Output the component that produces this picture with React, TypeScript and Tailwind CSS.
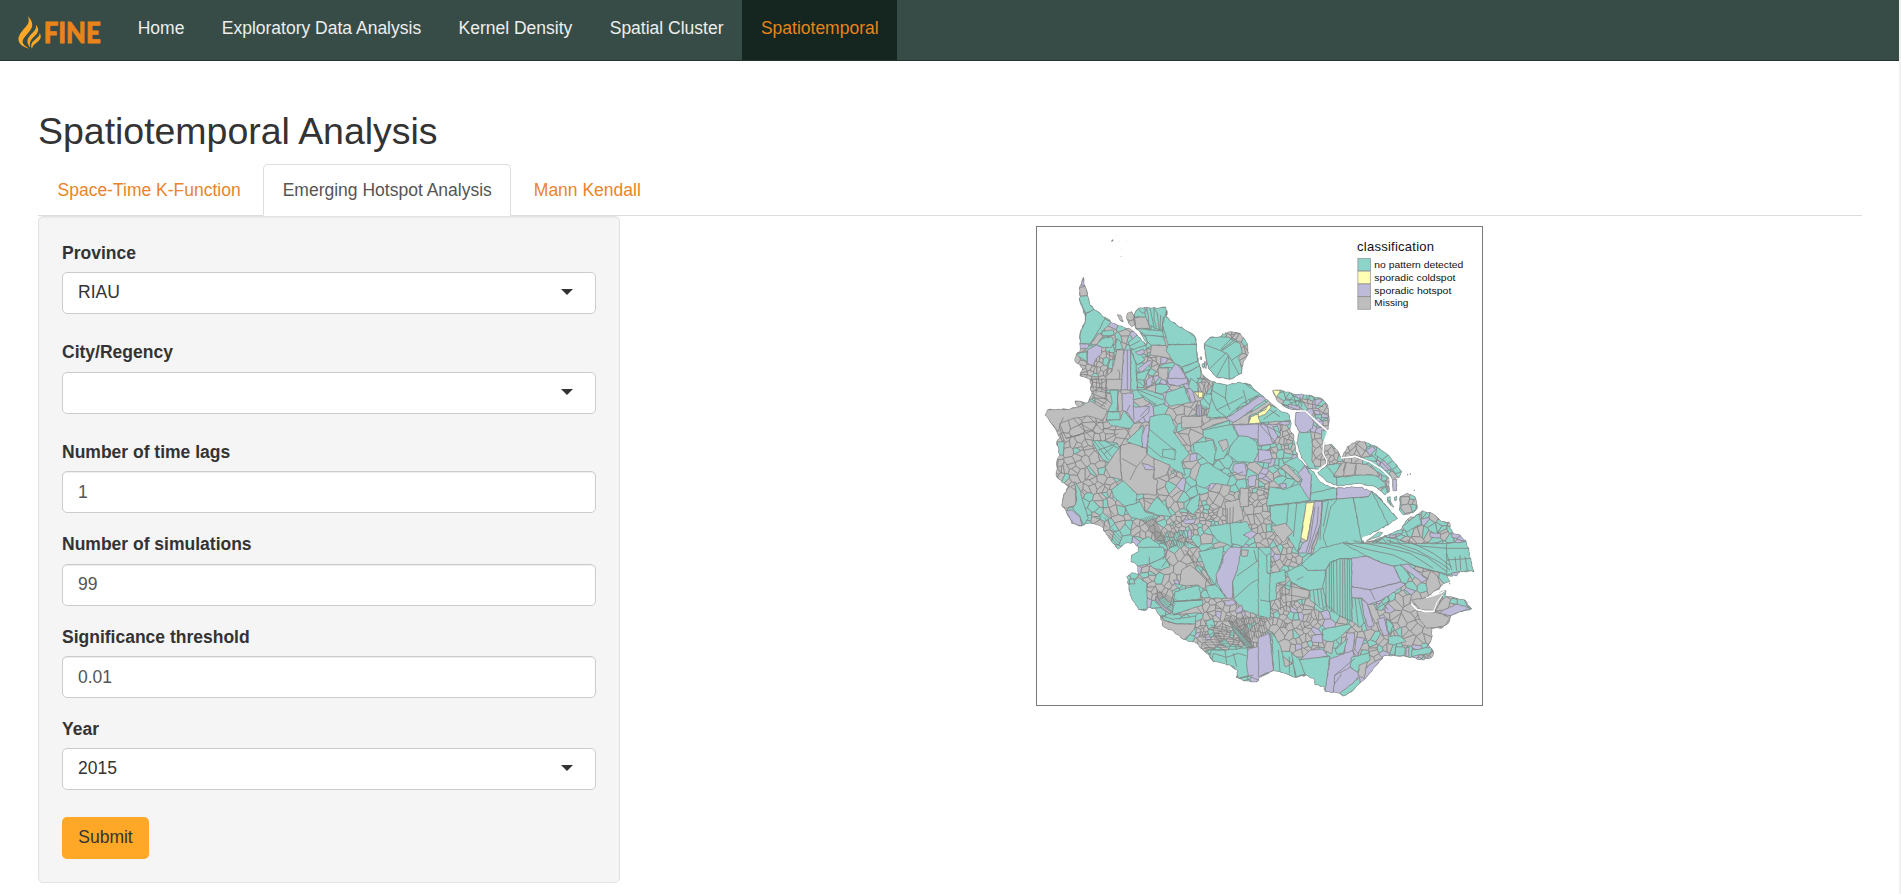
import React from "react";

type Pt = [number, number];
type Kind = "t" | "y" | "p" | "g";

const FILL: Record<Kind, string> = { t: "#8dd3c7", y: "#ffffb3", p: "#bebada", g: "#bebebe" };
const LINE = "#808080";

const parse = (s: string): Pt[] => s.trim().split(/\s+/).map((p) => p.split(",").map(Number) as Pt);
const toPath = (pts: Pt[]) => "M" + pts.map((p) => p[0].toFixed(1) + " " + p[1].toFixed(1)).join("L") + "Z";

function rng(seed: number) {
  let a = seed;
  return () => {
    a = (a + 0x6d2b79f5) | 0;
    let t = Math.imul(a ^ (a >>> 15), 1 | a);
    t = (t + Math.imul(t ^ (t >>> 7), 61 | t)) ^ t;
    return ((t ^ (t >>> 14)) >>> 0) / 4294967296;
  };
}

/* Breaks long edges up so a coast looks ragged. */
function rough(pts: Pt[], seed: number, amp: number): Pt[] {
  const r = rng(seed);
  const out: Pt[] = [];
  pts.forEach((p, i) => {
    const q = pts[(i + 1) % pts.length];
    const n = Math.max(1, Math.round(Math.hypot(q[0] - p[0], q[1] - p[1]) / 8));
    out.push(p);
    for (let k = 1; k < n; k++) {
      const t = k / n;
      out.push([p[0] + (q[0] - p[0]) * t + (r() - 0.5) * amp, p[1] + (q[1] - p[1]) * t + (r() - 0.5) * amp]);
    }
  });
  return out;
}

const MAINLAND = `160,172 166,200 172,226 180,255 194,270 225,292 250,310 275,318 305,330 320,342 335,362 349,376 350,368 335,345 318,327 312,303
312,282 325,265 345,262 380,265 408,262 412,275 408,290 440,315 475,335 495,350 500,375 502,410 510,440 515,460 530,475 560,490 590,495
630,487 655,492 690,522 720,548 750,572 778,585 782,605 780,630 792,650 795,675 802,710 820,730 845,752 862,775 885,795 918,805 950,802
990,802 1025,813 1045,830 1065,852 1085,878 1102,895 1075,915 1035,935 995,955 1002,970 1035,960 1080,942 1110,930 1130,900 1165,882
1177,872 1210,882 1235,905 1257,906 1260,925 1268,938 1290,945 1310,970 1318,1000 1325,1030 1332,1055 1300,1054 1285,1058 1280,1068
1250,1065 1260,1085 1235,1097 1228,1108 1210,1115 1190,1130 1210,1126 1248,1112 1245,1128 1280,1135 1305,1140 1325,1166 1290,1175 1262,1188
1255,1210 1230,1225 1205,1225 1205,1255 1195,1275 1210,1295 1205,1312 1180,1320 1130,1310 1065,1306 1045,1330 1015,1365 990,1390 965,1415
940,1428 930,1420 887,1415 882,1398 855,1395 850,1375 830,1365 795,1372 765,1360 730,1352 692,1370 685,1382 665,1386 635,1378 618,1372
625,1352 600,1335 550,1325 530,1300 500,1270 460,1258 425,1230 400,1220 388,1185 375,1165 355,1162 350,1170 325,1168 315,1150 300,1125
297,1095 290,1070 305,1058 325,1065 320,1035 303,1025 305,1005 325,995 326,980 310,967 285,970 265,988 235,950 215,920 200,914 175,910 155,918
125,910 108,872 95,855 100,830 115,800 80,770 80,725 90,705 80,665 90,655 78,630 60,605 45,585 52,570 110,568 145,560 135,543 175,548
185,525 180,480 150,468 158,445 135,425 138,405 150,395 150,340 165,305 165,285 150,245 148,205 155,190`;

const ISLANDS = [
  "523,370 540,352 570,350 600,335 630,340 652,370 655,400 640,425 635,460 600,478 560,472 535,445 525,400",
  "292,280 305,275 314,292 316,312 305,320 296,310 290,295",
  "262,284 272,286 280,305 272,303",
  "728,512 750,510 790,522 830,525 875,535 893,555 897,590 895,628 885,630 860,606 826,574 785,568 760,558 740,540",
  "798,577 825,575 848,598 892,634 882,665 878,700 890,715 888,732 865,748 840,745 815,715 800,670 808,635 795,610",
  "885,675 905,673 925,695 933,716 975,712 1020,727 1055,750 1077,770 1078,815 1065,825 1035,800 990,790 925,798 890,785 863,758 885,742 892,730 882,700",
  "935,713 952,680 980,663 1010,668 1040,680 1075,705 1115,755 1108,772 1085,775 1045,745 1010,720 980,707",
  "1088,778 1100,778 1100,812 1089,812",
  "1110,830 1130,820 1155,830 1162,865 1150,878 1120,885 1108,870",
  "1072,832 1081,830 1082,845 1092,862 1082,856 1073,846",
  "1093,832 1100,829 1100,840 1094,842",
  "512,410 516,412 514,420 510,416",
  "516,432 524,430 522,445 516,440",
  "524,424 530,430 528,446 523,440",
];

/* Cell density zones: centre, radius, cell size, share grey, share teal (rest hotspot). */
const ZONES: [number, number, number, number, number, number][] = [
  [700, 800, 2000, 31, 0.2, 0.72],
  [260, 420, 130, 24, 0.5, 0.45],
  [210, 450, 55, 15, 0.9, 0.1],
  [400, 430, 60, 17, 0.5, 0.42],
  [90, 620, 130, 34, 0.98, 0.02],
  [230, 610, 90, 30, 0.92, 0.08],
  [140, 740, 95, 19, 0.94, 0.06],
  [200, 800, 60, 20, 0.92, 0.08],
  [220, 900, 60, 22, 0.45, 0.55],
  [400, 710, 100, 32, 0.95, 0],
  [440, 760, 30, 14, 0.8, 0.15],
  [480, 580, 55, 22, 0.85, 0.1],
  [520, 490, 24, 11, 0.9, 0.1],
  [415, 835, 35, 18, 0.8, 0.2],
  [350, 900, 60, 19, 0.88, 0.12],
  [440, 930, 60, 15, 0.62, 0.35],
  [535, 880, 50, 13, 0.85, 0.12],
  [600, 850, 45, 22, 0.8, 0.2],
  [690, 830, 45, 15, 0.8, 0.15],
  [600, 950, 60, 25, 0.3, 0.66],
  [765, 660, 45, 14, 0.72, 0.2],
  [740, 740, 50, 20, 0.35, 0.55],
  [700, 920, 50, 20, 0.8, 0.2],
  [745, 990, 65, 17, 0.88, 0.1],
  [380, 1070, 70, 20, 0.85, 0.12],
  [480, 1040, 60, 26, 0.8, 0.2],
  [550, 1150, 60, 21, 0.88, 0.1],
  [560, 1240, 60, 14, 0.85, 0.12],
  [640, 1230, 70, 15, 0.88, 0.08],
  [580, 1310, 50, 22, 0.05, 0.95],
  [770, 1180, 70, 15, 0.84, 0.1],
  [820, 1230, 70, 17, 0.78, 0.15],
  [730, 1100, 50, 22, 0.9, 0.1],
  [1000, 1260, 90, 22, 0.65, 0.22],
  [1070, 1160, 60, 20, 0.5, 0.35],
  [1170, 1200, 95, 26, 0.96, 0.03],
  [1190, 1290, 40, 13, 0.7, 0.2],
  [1190, 1070, 55, 24, 0.88, 0.12],
  [1130, 1100, 36, 15, 0.7, 0.2],
  [1160, 930, 70, 19, 0.35, 0.5],
  [1240, 940, 70, 21, 0.7, 0.22],
  [1270, 1010, 60, 20, 0.2, 0.65],
  [830, 540, 90, 21, 0.3, 0.6],
  [870, 590, 45, 17, 0.4, 0.4],
  [860, 690, 50, 21, 0.78, 0.2],
  [905, 715, 40, 16, 0.98, 0.02],
  [980, 690, 50, 20, 0.92, 0.08],
  [1060, 715, 60, 24, 0.15, 0.65],
  [1140, 850, 40, 24, 0.5, 0.5],
  [1070, 800, 24, 13, 0.7, 0.3],
  [640, 395, 30, 16, 0.95, 0.05],
  [610, 345, 25, 14, 0.9, 0.1],
];

type Cell = { d: string; kind: Kind };

function buildCells(): Cell[] {
  const r = rng(77);
  const sites: { x: number; y: number; s: number; kind: Kind }[] = [];
  const zoneAt = (x: number, y: number) => {
    for (let i = ZONES.length - 1; i >= 0; i--) {
      const z = ZONES[i];
      if (Math.hypot(x - z[0], y - z[1]) <= z[2]) return i;
    }
    return -1;
  };
  ZONES.forEach((z, zi) => {
    const x0 = Math.max(30, z[0] - z[2]);
    const x1 = Math.min(1350, z[0] + z[2]);
    const y0 = Math.max(160, z[1] - z[2]);
    const y1 = Math.min(1440, z[1] + z[2]);
    for (let y = y0; y <= y1; y += z[3])
      for (let x = x0; x <= x1; x += z[3]) {
        const px = x + (r() - 0.5) * z[3] * 1.9;
        const py = y + (r() - 0.5) * z[3] * 1.9;
        const v = r();
        if (zoneAt(px, py) !== zi) continue;
        sites.push({ x: px, y: py, s: z[3], kind: v < z[4] ? "g" : v < z[4] + z[5] ? "t" : "p" });
      }
  });
  const B = 60;
  const grid = new Map<string, number[]>();
  sites.forEach((s, i) => {
    const k = Math.floor(s.x / B) + ":" + Math.floor(s.y / B);
    const list = grid.get(k);
    if (list) list.push(i);
    else grid.set(k, [i]);
  });
  return sites.map((s, i) => {
    const h = s.s * 2.4;
    let poly: Pt[] = [[s.x - h, s.y - h], [s.x + h, s.y - h], [s.x + h, s.y + h], [s.x - h, s.y + h]];
    const gx = Math.floor(s.x / B);
    const gy = Math.floor(s.y / B);
    for (let a = -2; a <= 2; a++)
      for (let b = -2; b <= 2; b++)
        for (const j of grid.get(gx + a + ":" + (gy + b)) || []) {
          if (j === i) continue;
          const o = sites[j];
          const nx = o.x - s.x;
          const ny = o.y - s.y;
          const c = (nx * (o.x + s.x) + ny * (o.y + s.y)) / 2;
          const next: Pt[] = [];
          for (let k = 0; k < poly.length; k++) {
            const p = poly[k];
            const q = poly[(k + 1) % poly.length];
            const dp = p[0] * nx + p[1] * ny - c;
            const dq = q[0] * nx + q[1] * ny - c;
            if (dp <= 0) next.push(p);
            if (dp < 0 !== dq < 0 && dp !== dq) {
              const t = dp / (dp - dq);
              next.push([p[0] + (q[0] - p[0]) * t, p[1] + (q[1] - p[1]) * t]);
            }
          }
          poly = next;
        }
    return { d: poly.length > 2 ? toPath(poly) : "", kind: s.kind };
  });
}

/* Named districts, grouped by map sheet; each sheet has its own origin. */
const SHEETS: { at: Pt; areas: [Kind, string][]; lines: string[] }[] = [
  {
    at: [0, 0],
    areas: [
      ["p", "153,195 160,172 166,198"],
      ["g", "148,203 168,198 173,226 150,229"],
      ["t", "148,229 173,226 182,255 194,268 168,280 150,245"],
      ["t", "168,280 194,268 225,292 226,302 182,372 148,372 152,335 166,305"],
      ["t", "226,296 243,308 220,332 182,370"],
      ["g", "182,372 205,340 220,346 200,374"],
      ["p", "148,371 178,372 172,386 148,385"],
      ["p", "172,390 200,374 217,380 215,400 198,418 190,437 172,430"],
      ["t", "200,374 215,356 245,350 253,365 245,382 217,382"],
      ["t", "136,402 170,395 172,425 150,412"],
      ["t", "216,333 250,330 252,345 216,347"],
      ["t", "255,388 260,356 270,362 280,388"],
      ["g", "260,389 282,390 275,510 228,510 228,468 245,455 255,420"],
      ["p", "282,390 302,390 303,510 273,510"],
      ["t", "302,388 318,430 322,510 303,510"],
      ["t", "295,366 325,343 346,374 322,393 300,385"],
      ["t", "303,390 345,376 352,385 330,400 345,420 320,435"],
      ["p", "316,396 340,388 344,398 326,405"],
      ["p", "325,445 360,420 366,430 332,458"],
      ["t", "320,460 358,448 345,480 322,478"],
      ["p", "350,480 368,468 366,492 350,505"],
      ["t", "384,438 420,428 450,430 435,442 395,444"],
      ["g", "385,444 415,444 412,485 385,470"],
      ["p", "412,490 418,455 436,430 452,445 479,490 430,497"],
      ["t", "350,262 410,262 408,285 397,332 378,325 358,315"],
      ["g", "312,292 347,290 360,325 318,325"],
      ["t", "312,282 325,265 335,278 345,280 347,290 314,292"],
      ["t", "318,325 397,333 401,350 345,346"],
      ["t", "345,346 401,350 408,376 365,376 350,362"],
      ["g", "365,376 408,376 430,420 400,411 360,404"],
      ["t", "412,270 408,290 440,315 475,335 495,350 500,373 414,374 397,315 405,288"],
      ["t", "414,374 500,373 503,423 455,442 430,426 408,392"],
      ["t", "455,442 503,423 510,438 464,460"],
      ["t", "464,460 510,438 514,462 500,490 484,505 478,485"],
      ["t", "523,370 540,352 570,350 597,352 612,362 632,372 636,400 625,412 635,445 635,460 600,478 560,472 535,445 525,400"],
    ],
    lines: [
      "M525 374L572 392L618 356M572 388L610 350M576 392L618 364M540 445L590 397M560 470L596 405L598 478M598 410L630 468M596 405L572 392M606 420L635 400",
      "M360 264L372 322M372 264L372 300L380 322M382 282L388 330M392 285L390 330M400 290L396 330M372 264L384 284",
      "M292 390L292 510M262 450Q272 448 268 478",
      "M238 390L240 420L228 460M250 400L248 440",
      "M300 378L330 362M345 405L362 415",
    ],
  },
  {
    at: [0, 480],
    areas: [
      ["g", "40,105 50,88 110,88 150,80 180,62 232,92 218,122 175,108 130,115 92,130 84,155 60,125"],
      ["t", "240,30 264,30 262,95 234,95 246,70"],
      ["t", "234,95 270,95 270,120 228,120"],
      ["t", "228,120 270,120 282,92 312,130 302,145 245,138"],
      ["p", "275,40 310,40 310,80 358,80 356,98 315,130 290,95 276,90"],
      ["g", "264,30 275,40 277,92 264,95"],
      ["t", "322,30 345,28 400,45 405,70 380,78 345,60"],
      ["t", "408,38 462,20 482,68 420,78 406,58"],
      ["p", "410,-5 474,-5 472,10 440,18 415,12"],
      ["p", "470,25 486,25 497,65 485,68"],
      ["p", "500,75 515,75 515,108 500,108"],
      ["t", "482,-5 502,10 505,35 490,36 476,20"],
      ["y", "492,36 522,36 520,50 508,53"],
      ["t", "360,110 400,102 420,105 437,142 430,155 478,222 455,245 466,286 350,225 358,135"],
      ["t", "290,182 340,135 338,200 320,202"],
      ["p", "348,135 358,136 350,205 337,200 335,168"],
      ["t", "398,208 435,208 435,240 398,230"],
      ["t", "186,182 222,182 262,190 270,205 235,248 215,235"],
      ["g", "272,196 300,190 350,205 350,222 375,238 370,295 382,300 380,345 320,342 275,302 270,240"],
      ["g", "225,262 272,196 270,240 275,300 240,290"],
      ["g", "372,237 420,255 410,285 372,298"],
      ["p", "336,248 372,262 374,270 345,268"],
      ["t", "245,328 280,302 320,342 320,372 285,380 250,350"],
      ["t", "284,380 330,365 345,395 390,410 350,425 300,410"],
      ["t", "135,305 150,330 160,368 175,415 160,438 150,410 128,385 140,360"],
      ["g", "100,345 118,318 136,330 136,375 110,385 94,378"],
      ["p", "106,392 125,390 150,410 155,438 130,430"],
      ["t", "82,185 102,185 100,225 85,225"],
      ["g", "455,110 516,108 516,140 455,145"],
      ["t", "548,0 575,12 635,5 690,42 640,68 590,112 530,112 545,55"],
      ["g", "512,140 545,118 590,113 600,120 560,132 518,150"],
      ["t", "520,148 600,120 600,135 520,165"],
      ["p", "588,115 690,48 712,55 612,128"],
      ["g", "608,128 690,80 718,60 720,72 680,100 658,108 655,132 605,134"],
      ["y", "655,132 662,110 685,103 700,88 718,74 722,96 695,110 690,130"],
      ["p", "610,134 722,133 722,192 688,200 682,178 625,168"],
      ["p", "680,215 722,208 722,250 672,245"],
      ["t", "600,200 625,168 655,170 680,185 686,215 670,248 620,245 595,225"],
      ["t", "518,150 605,134 625,168 600,200 582,235 555,240 550,225 560,205 550,180 520,170"],
      ["g", "565,185 590,178 595,200 580,215"],
      ["t", "497,300 512,255 535,248 560,265 600,290 592,315 545,310 525,325 500,315"],
      ["t", "490,190 550,180 558,215 550,255 535,248 510,225 492,215"],
      ["p", "480,222 500,220 500,240 480,245"],
      ["p", "612,252 645,248 650,285 625,285 608,270"],
      ["p", "655,290 680,285 675,320 655,318"],
      ["g", "585,365 632,358 640,420 590,435"],
      ["g", "630,325 655,325 655,380 630,380"],
      ["p", "456,422 498,416 492,430 468,432"],
      ["p", "474,450 484,450 484,478 474,478"],
      ["t", "380,350 410,380 425,410 380,405 350,392"],
      ["t", "480,360 510,340 505,385 488,405 468,385"],
      ["t", "535,440 600,430 620,445 605,500 560,480"],
      ["t", "600,430 650,425 668,460 640,500 605,490"],
      ["p", "640,465 665,452 680,460 662,478"],
      ["t", "300,545 305,520 335,480 355,470 385,490 410,545"],
      ["t", "500,545 512,520 545,500 580,525 575,545"],
    ],
    lines: [
      "M358 148L440 215M350 195L398 235M545 55L560 90L590 112M590 12L586 55L600 90M545 30L588 56M640 30L650 68M560 90L640 50M88 130L108 175L150 165M108 175L180 155L220 115M130 115L160 150L188 175M150 130L200 160M92 130L100 112M175 108L215 150L245 140M250 150L300 145M272 196L300 150M275 235L320 260L350 225M320 260L300 300M222 182L265 160",
      "M192 182L235 240M205 184L245 230M225 183L265 205M205 210L262 190M222 222L250 200",
      "M180 -2L275 -2M180 20L235 25M185 -5L190 25M200 0L198 40M215 -5L215 35M230 0L225 60M185 40L235 60M186 50L230 72M185 58L225 80M190 30L240 40",
      "M600 290L640 275M592 385L592 430M600 382L600 432M610 380L608 430M500 -5L545 0",
      "M540 0L530 25M688 140L722 190M695 134L722 170M310 80L312 120M355 82L330 110M290 95L300 75",
      "M345 0L345 20M320 0L345 22L395 10M325 30L400 60M335 45L380 75",
    ],
  },
  {
    at: [0, 990],
    areas: [
      ["t", "300,40 303,12 325,-8 400,-8 405,20 360,42 325,48"],
      ["t", "358,42 405,20 420,50 395,60 372,55"],
      ["t", "295,105 325,82 350,98 352,178 325,180 298,135"],
      ["t", "298,88 312,85 315,102 298,102"],
      ["t", "435,125 505,105 512,130 510,148 430,155"],
      ["t", "430,155 518,148 518,165 455,188 428,192"],
      ["t", "395,196 430,208 497,198 497,222 440,222 402,212"],
      ["g", "388,195 402,212 440,222 497,222 492,240 460,270 425,244 396,236"],
      ["g", "430,195 500,170 515,188 450,192"],
      ["p", "378,138 400,168 425,185 420,192 395,175 376,150"],
      ["p", "430,90 445,90 448,102 438,102"],
      ["t", "505,5 580,-10 578,20 562,70 558,100 545,104"],
      ["p", "562,100 558,75 578,38 580,18 600,-8 634,-8 630,45 608,95 608,145 590,145"],
      ["t", "634,-8 722,-8 722,195 690,198 640,180 612,148 608,95 622,60"],
      ["g", "634,0 655,0 652,18 634,18"],
      ["t", "525,108 558,104 590,145 540,145"],
      ["p", "580,152 610,150 618,162 590,168"],
      ["p", "615,180 635,165 638,182 620,190"],
      ["t", "528,215 548,205 555,230 535,238"],
      ["t", "545,298 590,300 650,293 655,310 652,340 672,372 625,385 612,350 555,338 540,320"],
      ["p", "654,298 690,288 692,310 697,375 685,390 655,378 650,345"],
      ["p", "690,285 708,262 722,250 722,370 697,372 692,330"],
      ["t", "598,215 612,230 668,290 650,292 620,255"],
      ["g", "455,60 480,45 530,85 525,118 500,105 470,108 448,104"],
    ],
    lines: [
      "M620 78L680 35L720 10M612 145L665 98L720 70M680 35L672 0M722 120L690 198M430 155L516 150M545 335L550 310L590 322L625 310L650 318M585 300L590 340M610 310L620 350M395 200L420 190M395 52L420 18M410 5L398 30M358 20L358 42M465 0L540 100M480 0L552 100M475 10L500 60L545 108M630 385L670 375",
      "M602 212L670 290M612 212L668 280",
    ],
  },
  {
    at: [690, 480],
    areas: [
      ["y", "36,30 62,30 50,53"],
      ["p", "105,94 138,94 162,122 158,145 135,160 118,155 104,130"],
      ["p", "158,122 175,112 190,128 180,142"],
      ["t", "116,155 135,158 152,155 158,195 155,240 170,268 142,265 124,238 108,192"],
      ["t", "185,150 204,153 190,192 184,175"],
      ["p", "160,92 178,92 180,104 168,104"],
      ["p", "85,72 118,78 118,90 85,88"],
      ["t", "30,75 -5,108 0,128 92,122 95,105 62,88"],
      ["y", "-5,110 -5,98 15,90 28,72 33,82 15,104"],
      ["p", "-5,132 62,135 60,158 38,192 -5,196"],
      ["t", "38,140 52,138 62,165 56,172"],
      ["p", "-5,208 30,212 38,235 -5,246"],
      ["p", "60,125 88,124 88,134 60,134"],
      ["t", "70,250 115,228 135,255 118,280 95,262"],
      ["p", "114,280 134,258 156,288 150,360 118,325 126,298"],
      ["t", "138,262 165,270 195,310 230,320 230,357 152,362 154,285"],
      ["t", "18,378 28,320 75,328 118,312 150,362 85,370"],
      ["g", "62,262 78,252 122,298 115,308"],
      ["p", "58,312 78,310 80,322 66,326"],
      ["t", "230,322 230,357 150,363 152,340"],
      ["p", "230,320 300,316 340,331 325,350 230,358"],
      ["t", "187,364 232,357 220,395 205,430 208,500 225,520 200,540 150,540 175,470"],
      ["t", "232,357 280,354 308,492 320,540 215,540 190,470 212,380"],
      ["t", "280,354 325,350 335,333 390,430 310,478 308,500"],
      ["t", "335,333 372,370 416,418 385,435"],
      ["t", "30,378 88,372 80,440 52,440 32,420"],
      ["t", "85,371 140,367 122,478 112,515 82,470 80,430"],
      ["y", "139,368 163,366 141,483 123,474"],
      ["p", "163,366 187,364 182,430 155,502 154,520 114,518 126,492 142,482"],
      ["g", "32,440 75,430 98,455 70,488 55,470"],
      ["p", "275,540 310,526 330,540"],
      ["t", "308,512 345,490 372,470 420,480 470,505 540,525 560,545 320,545"],
      ["t", "385,455 420,440 430,458 395,466"],
      ["t", "425,440 475,402 485,430 440,455"],
      ["p", "510,458 542,460 542,474 512,472"],
      ["p", "485,490 530,488 525,500 490,510"],
      ["p", "574,458 606,464 590,475 576,472"],
      ["t", "170,277 200,255 228,262 222,290 235,292 300,284 345,285 375,310 378,318 345,330 300,315 235,322 198,308"],
      ["t", "198,255 242,250 235,268 222,286"],
      ["g", "220,288 245,250 258,248 250,270 262,290"],
      ["g", "258,248 290,250 282,285 250,288"],
      ["g", "290,250 325,255 350,275 360,290 340,285 285,285"],
      ["t", "320,240 350,245 395,290 385,295 350,275"],
      ["p", "396,298 412,296 412,334 396,334"],
      ["t", "350,200 385,220 425,275 408,282 370,240 345,225"],
      ["p", "318,210 338,198 346,208 330,228"],
      ["p", "348,240 362,245 355,262"],
    ],
    lines: [
      "M165 380L150 480L138 516M175 380L172 430L145 516M187 364L180 480M205 365L190 440M110 372L100 470M390 480L400 540M410 480L470 538M350 490L385 540M370 478L420 540M335 500L360 540M0 135L50 190M12 134L62 160M20 134L38 190M30 90L60 110M10 118L50 90M230 290L230 320M62 262L116 310M350 485L370 475",
      "M60 70L120 92M120 50L125 80M100 42L110 80M75 55L190 80M140 48L145 78M165 52L165 78",
      "M365 240L385 225M380 255L400 240M395 270L412 258M190 100L207 100M170 130L206 110",
    ],
  },
  {
    at: [690, 990],
    areas: [
      ["t", "-5,-8 20,18 22,68 32,72 30,205 -5,198"],
      ["t", "30,70 75,60 78,95 50,100 48,150 28,155"],
      ["t", "148,20 180,-5 260,-25 330,18 275,26 240,26 210,38 195,62 145,62 125,45"],
      ["t", "80,65 125,45 145,62 195,60 202,95 192,118 150,122 122,112 92,95"],
      ["g", "92,98 125,115 148,122 145,145 70,158 62,140 88,130"],
      ["t", "198,62 210,38 240,26 276,26 276,214 240,198 200,165 188,118"],
      ["t", "276,142 305,145 318,215 300,232 276,214"],
      ["t", "148,122 190,115 200,165 190,180 150,150"],
      ["p", "275,25 320,18 370,40 402,48 424,95 330,120 275,110"],
      ["p", "275,110 330,120 424,95 436,105 365,150 325,166 305,144 275,143"],
      ["t", "320,18 250,-20 560,-20 640,0 560,75 500,58 450,42 402,48 370,40"],
      ["t", "402,48 424,44 450,80 440,100 424,98"],
      ["p", "420,46 444,42 502,88 486,98 455,72"],
      ["t", "560,-20 622,-25 642,66 622,62 560,75"],
      ["p", "574,70 598,64 602,78 580,82"],
      ["t", "345,178 380,138 388,150 365,182"],
      ["g", "512,62 530,75 542,108 505,140 498,100"],
      ["g", "455,150 510,140 555,118 545,145 525,182 480,178"],
      ["g", "470,182 525,188 545,190 570,205 555,228 500,235 480,210"],
      ["g", "525,182 545,150 560,140 575,150 560,180"],
      ["p", "542,185 590,162 635,175 600,185 570,197 545,192"],
      ["t", "568,160 575,145 592,148 592,163"],
      ["p", "304,148 322,160 342,228 325,232 310,190"],
      ["g", "322,165 342,162 365,215 345,220"],
      ["p", "352,208 372,202 386,256 370,258"],
      ["t", "188,238 265,222 275,228 240,262 215,278 188,270"],
      ["p", "260,248 284,250 282,280 275,310 252,318"],
      ["t", "225,300 262,265 250,310 230,312"],
      ["p", "288,262 315,265 295,312 285,300"],
      ["g", "200,275 222,275 215,312 190,300"],
      ["t", "385,258 420,258 438,275 400,285 385,282"],
      ["t", "380,205 400,225 390,255 382,240"],
      ["p", "-5,262 28,245 40,362 -5,380"],
      ["t", "36,245 62,290 75,350 100,340 108,385 75,372 40,364"],
      ["t", "95,310 122,330 145,350 135,372 108,380 100,345"],
      ["p", "122,328 150,300 188,298 205,318 140,330"],
      ["p", "155,256 186,252 190,278 155,276"],
      ["t", "118,330 210,318 197,428 160,408 135,372"],
      ["p", "210,326 278,302 285,330 272,362 225,375 222,430 195,428"],
      ["p", "225,375 272,352 300,372 290,395 240,435 220,430"],
      ["t", "275,322 328,308 330,330 290,365 270,352"],
      ["p", "328,345 378,315 300,405 290,385"],
      ["t", "298,382 302,402 252,440 240,430"],
      ["g", "298,345 322,335 312,385 295,375"],
      ["t", "408,290 435,292 435,318 405,318"],
      ["t", "455,300 520,290 510,310 455,320"],
      ["p", "438,292 448,292 445,320 438,320"],
    ],
    lines: [
      "M208 40L208 180M214 34L215 185M220 30L222 190M230 28L232 190M240 26L240 200M248 26L248 205M254 26L256 208M262 26L262 212M268 26L270 212M198 62L198 165M285 143L295 232M295 143L312 220M160 122L165 160M172 118L178 168M182 118L190 175",
      "M260 -20L330 0L400 15L470 50L560 72M280 -28L400 -2L450 10L520 55M330 -30L420 -8L500 20L560 65M380 -30L470 0L540 38L570 60M440 -30L520 10L575 50M420 -30L480 -12L560 -5L635 -5M560 30L635 25M560 10L575 60M585 20L590 62M600 15L602 60M615 20L622 60",
      "M225 375L285 325M245 372L225 400M110 90L130 80M0 150L30 155M30 72L20 68M55 100L140 120M60 130L145 145M60 110L62 180M75 100L80 180M95 95L95 170M55 300L60 365M88 320L88 370M330 118L345 150M345 180L390 150M360 150L385 180",
    ],
  },
];

/* Fans of narrow parcels: start edge, end edge, count. */
const FANS: [number, number, number, number, number, number, number, number, number][] = [
  [335, 895, 370, 885, 385, 965, 412, 980, 7],
  [395, 935, 460, 930, 420, 985, 475, 975, 9],
  [205, 915, 240, 870, 225, 935, 252, 885, 4],
  [230, 950, 245, 925, 262, 985, 275, 955, 4],
  [380, 1110, 374, 1145, 440, 1140, 425, 1185, 8],
  [590, 1195, 640, 1190, 640, 1275, 668, 1285, 9],
  [540, 1215, 560, 1275, 600, 1225, 640, 1282, 8],
  [640, 1190, 700, 1190, 655, 1265, 715, 1245, 9],
  [510, 1245, 525, 1290, 570, 1240, 590, 1290, 6],
  [555, 480, 505, 505, 540, 525, 505, 535, 3],
  [500, 555, 530, 560, 498, 590, 530, 588, 6],
];

const fanPath = (f: (typeof FANS)[number]) => {
  let d = "";
  for (let i = 0; i <= f[8]; i++) {
    const t = i / f[8];
    d += `M${(f[0] + (f[2] - f[0]) * t).toFixed(1)} ${(f[1] + (f[3] - f[1]) * t).toFixed(1)}L${(f[4] + (f[6] - f[4]) * t).toFixed(1)} ${(f[5] + (f[7] - f[5]) * t).toFixed(1)}`;
  }
  return d;
};

const LAND = [toPath(rough(parse(MAINLAND), 5, 5)), ...ISLANDS.map((s, i) => toPath(rough(parse(s), 20 + i, 3)))].join("");
const CELLS = buildCells();

const LEGEND: { kind: Kind; label: string; y: number; w: number }[] = [
  { kind: "t", label: "no pattern detected", y: 114, w: 267 },
  { kind: "y", label: "sporadic coldspot", y: 152.5, w: 243 },
  { kind: "p", label: "sporadic hotspot", y: 191, w: 231 },
  { kind: "g", label: "Missing", y: 229, w: 102 },
];

function HotspotMap() {
  return (
    <svg className="block h-[490px] w-[480px] shrink-0" viewBox="0 0 1440 1470" role="img" aria-label="Emerging hotspot map of Riau">
      <defs>
        <clipPath id="land">
          <path d={LAND} />
        </clipPath>
      </defs>
      <rect x="19.5" y="19.5" width="1338" height="1437" fill="#fff" stroke="#7a7a7a" strokeWidth="3" />
      <g clipPath="url(#land)" stroke={LINE} strokeWidth="2.3" strokeLinejoin="round">
        <path d={LAND} fill={FILL.g} />
        <g strokeWidth="2">
          {CELLS.map((c, i) => (
            <path key={i} d={c.d} fill={FILL[c.kind]} />
          ))}
        </g>
        {SHEETS.map((s, i) => (
          <g key={i} transform={`translate(${s.at[0]} ${s.at[1]})`}>
            {s.areas.map(([kind, pts], j) => (
              <path key={j} d={toPath(rough(parse(pts), 100 + j, 2.5))} fill={FILL[kind]} />
            ))}
            {s.lines.map((d, j) => (
              <path key={"l" + j} d={d} fill="none" />
            ))}
          </g>
        ))}
        {FANS.map((f, i) => (
          <path key={i} d={fanPath(f)} fill="none" strokeWidth="2" />
        ))}
      </g>
      <path d={LAND} fill="none" stroke={LINE} strokeOpacity="0.75" strokeWidth="2.2" />
      <g fill="none" stroke="#fff" strokeWidth="5" strokeLinecap="round" strokeLinejoin="round">
        <path d="M1145 1152L1160 1168L1185 1174L1212 1174" />
        <path d="M1212 1172L1222 1145L1240 1122" strokeWidth="3" />
        <path d="M1190 1133L1225 1122L1242 1114" strokeWidth="4" />
        <path d="M795 573L826 573L860 605L893 634" strokeWidth="5" />
        <path d="M893 634L881 668L879 700L890 720L889 732L868 747" strokeWidth="4" />
        <path d="M934 714L975 709L1020 726L1055 748L1080 772L1083 810" strokeWidth="5" />
        <path d="M1002 956L1035 946L1080 926L1106 905" strokeWidth="12" />
      </g>
      <path d="M1030 948L1045 936L1058 938L1050 948L1010 962Z" fill={FILL.t} stroke={LINE} strokeWidth="2" />
      <g fill={LINE}>
        <path d="M243 64L248 58L251 60L246 66Z" />
        <g fillOpacity="0.5">
          <circle cx="260" cy="46" r="1" /><circle cx="268" cy="63" r="1" /><circle cx="290" cy="65" r="1" />
          <circle cx="273" cy="89" r="1" /><path d="M270 109h6v1h-6z" />
        </g>
        <circle cx="578" cy="342" r="2" /><circle cx="586" cy="339" r="2" />
        <circle cx="1133" cy="764" r="2" /><circle cx="1141" cy="762" r="2" /><circle cx="1153" cy="811" r="2" />
        <circle cx="1259" cy="1091" r="2" /><circle cx="1005" cy="794" r="2" />
      </g>
      <g fontFamily="'Liberation Sans', Arial, sans-serif" fill="#111">
        <text x="981" y="93" fontSize="39" textLength="231">classification</text>
        {LEGEND.map((l) => (
          <g key={l.kind}>
            <rect x="983.5" y={l.y + 1} width="38" height="38" fill={FILL[l.kind]} stroke={LINE} strokeOpacity="0.7" strokeWidth="2.5" />
            <text x="1033" y={l.y + 30} fontSize="27" textLength={l.w} lengthAdjust="spacingAndGlyphs">{l.label}</text>
          </g>
        ))}
      </g>
    </svg>
  );
}

function Logo() {
  return (
    <svg className="mt-[10px] h-[42px] w-[84px] shrink-0" viewBox="0 -12 252 126" role="img" aria-label="FINE">
      <path d="M29 6C39 16 46 27 41 41C35 56 16 68 14 81C13 91 20 96 34 104C22 101 8 95 3 84C-3 69 9 54 21 41C33 29 35 18 29 6Z" fill="#ffa726" />
      <path d="M54 32C64 44 62 55 51 65C40 75 32 84 37 101C24 87 27 73 38 62C49 51 56 45 54 32Z" fill="#ffa726" />
      <path d="M65 58C71 67 69 76 58 84C50 90 44 94 42 104C36 92 42 84 51 77C60 70 65 66 65 58Z" fill="#ffa726" />
      <text x="77" y="88" textLength="171" lengthAdjust="spacingAndGlyphs" fontFamily="Lato, sans-serif" fontWeight="900" fontSize="88" fill="#e8841a" stroke="#e8841a" strokeWidth="2.5">FINE</text>
    </svg>
  );
}

const NAV = ["Home", "Exploratory Data Analysis", "Kernel Density", "Spatial Cluster", "Spatiotemporal"];
const TABS = ["Space-Time K-Function", "Emerging Hotspot Analysis", "Mann Kendall"];

function Field({ label, value, select, last }: { label: string; value: string; select?: boolean; last?: boolean }) {
  return (
    <div className={last ? "mb-[26.5px]" : select ? "mb-[26.2px]" : "mb-[19.1px]"}>
      <label className="mb-[6.25px] block h-[25px] text-[17.5px] leading-[25px] font-bold text-[#333]">{label}</label>
      {select ? (
        <div className="flex h-[42.2px] items-center justify-between rounded-[5px] border border-[#ccc] bg-white pr-[22px] pl-[15px]">
          <span className="pb-[2px] text-[17.5px] text-[#333]">{value}</span>
          <span className="mb-[2px] h-0 w-0 border-x-[6px] border-t-[6px] border-x-transparent border-t-[#333]" />
        </div>
      ) : (
        <div className="flex h-[42px] items-center rounded-[5px] border border-[#ccc] bg-white pl-[15px] text-[17.5px] text-[#555] shadow-[inset_0_1px_1px_rgba(0,0,0,0.075)]">
          {value}
        </div>
      )}
    </div>
  );
}

export default function App() {
  return (
    <div className="h-[894px] overflow-hidden border-r-2 border-[#f0f0f0] bg-white font-['Liberation_Sans',Arial,sans-serif] text-[17.5px] text-[#333]">
      <nav className="flex h-[61px] border-b border-[#23352f] bg-[#374c46] pl-[18px]">
        <Logo />
        <div className="ml-[17px] flex">
          {NAV.map((n) => (
            <a
              key={n}
              className={
                "h-[60px] px-[18.7px] pt-[16px] leading-[25px] " +
                (n === "Spatiotemporal" ? "bg-[#15251f] text-[#e8841a]" : "text-[#eee]")
              }
            >
              {n}
            </a>
          ))}
        </div>
      </nav>
      <main className="pr-[37px] pl-[38px] pt-[50px]">
        <h2 className="h-[53px] text-[37.5px] leading-[41px] font-normal tracking-[-0.03px]">Spatiotemporal Analysis</h2>
        <div className="flex h-[52px] border-b border-[#ddd]">
          {TABS.map((t) => (
            <a
              key={t}
              className={
                "mr-[3px] h-[52px] rounded-t-[5px] border px-[18.5px] pt-[12.5px] leading-[25px] " +
                (t === "Emerging Hotspot Analysis" ? "border-[#ddd] border-b-white bg-white text-[#555]" : "border-transparent text-[#e8842b]")
              }
            >
              {t}
            </a>
          ))}
        </div>
        <div className="flex">
          <aside className="h-[667px] w-[582px] shrink-0 rounded-[5px] border border-[#e3e3e3] bg-[#f5f5f5] pt-[23.75px] pr-[23.5px] pl-[23px] shadow-[inset_0_1px_1px_rgba(0,0,0,0.05)]">
            <Field label="Province" value="RIAU" select />
            <Field label="City/Regency" value="" select />
            <Field label="Number of time lags" value="1" />
            <Field label="Number of simulations" value="99" />
            <Field label="Significance threshold" value="0.01" />
            <Field label="Year" value="2015" select last />
            <button className="h-[42px] w-[87px] rounded-[5px] bg-[#ffa726] pb-[2px] text-[17.5px] text-[#333]">Submit</button>
          </aside>
          <section className="mt-[4px] ml-[410px]">
            <HotspotMap />
          </section>
        </div>
      </main>
    </div>
  );
}
